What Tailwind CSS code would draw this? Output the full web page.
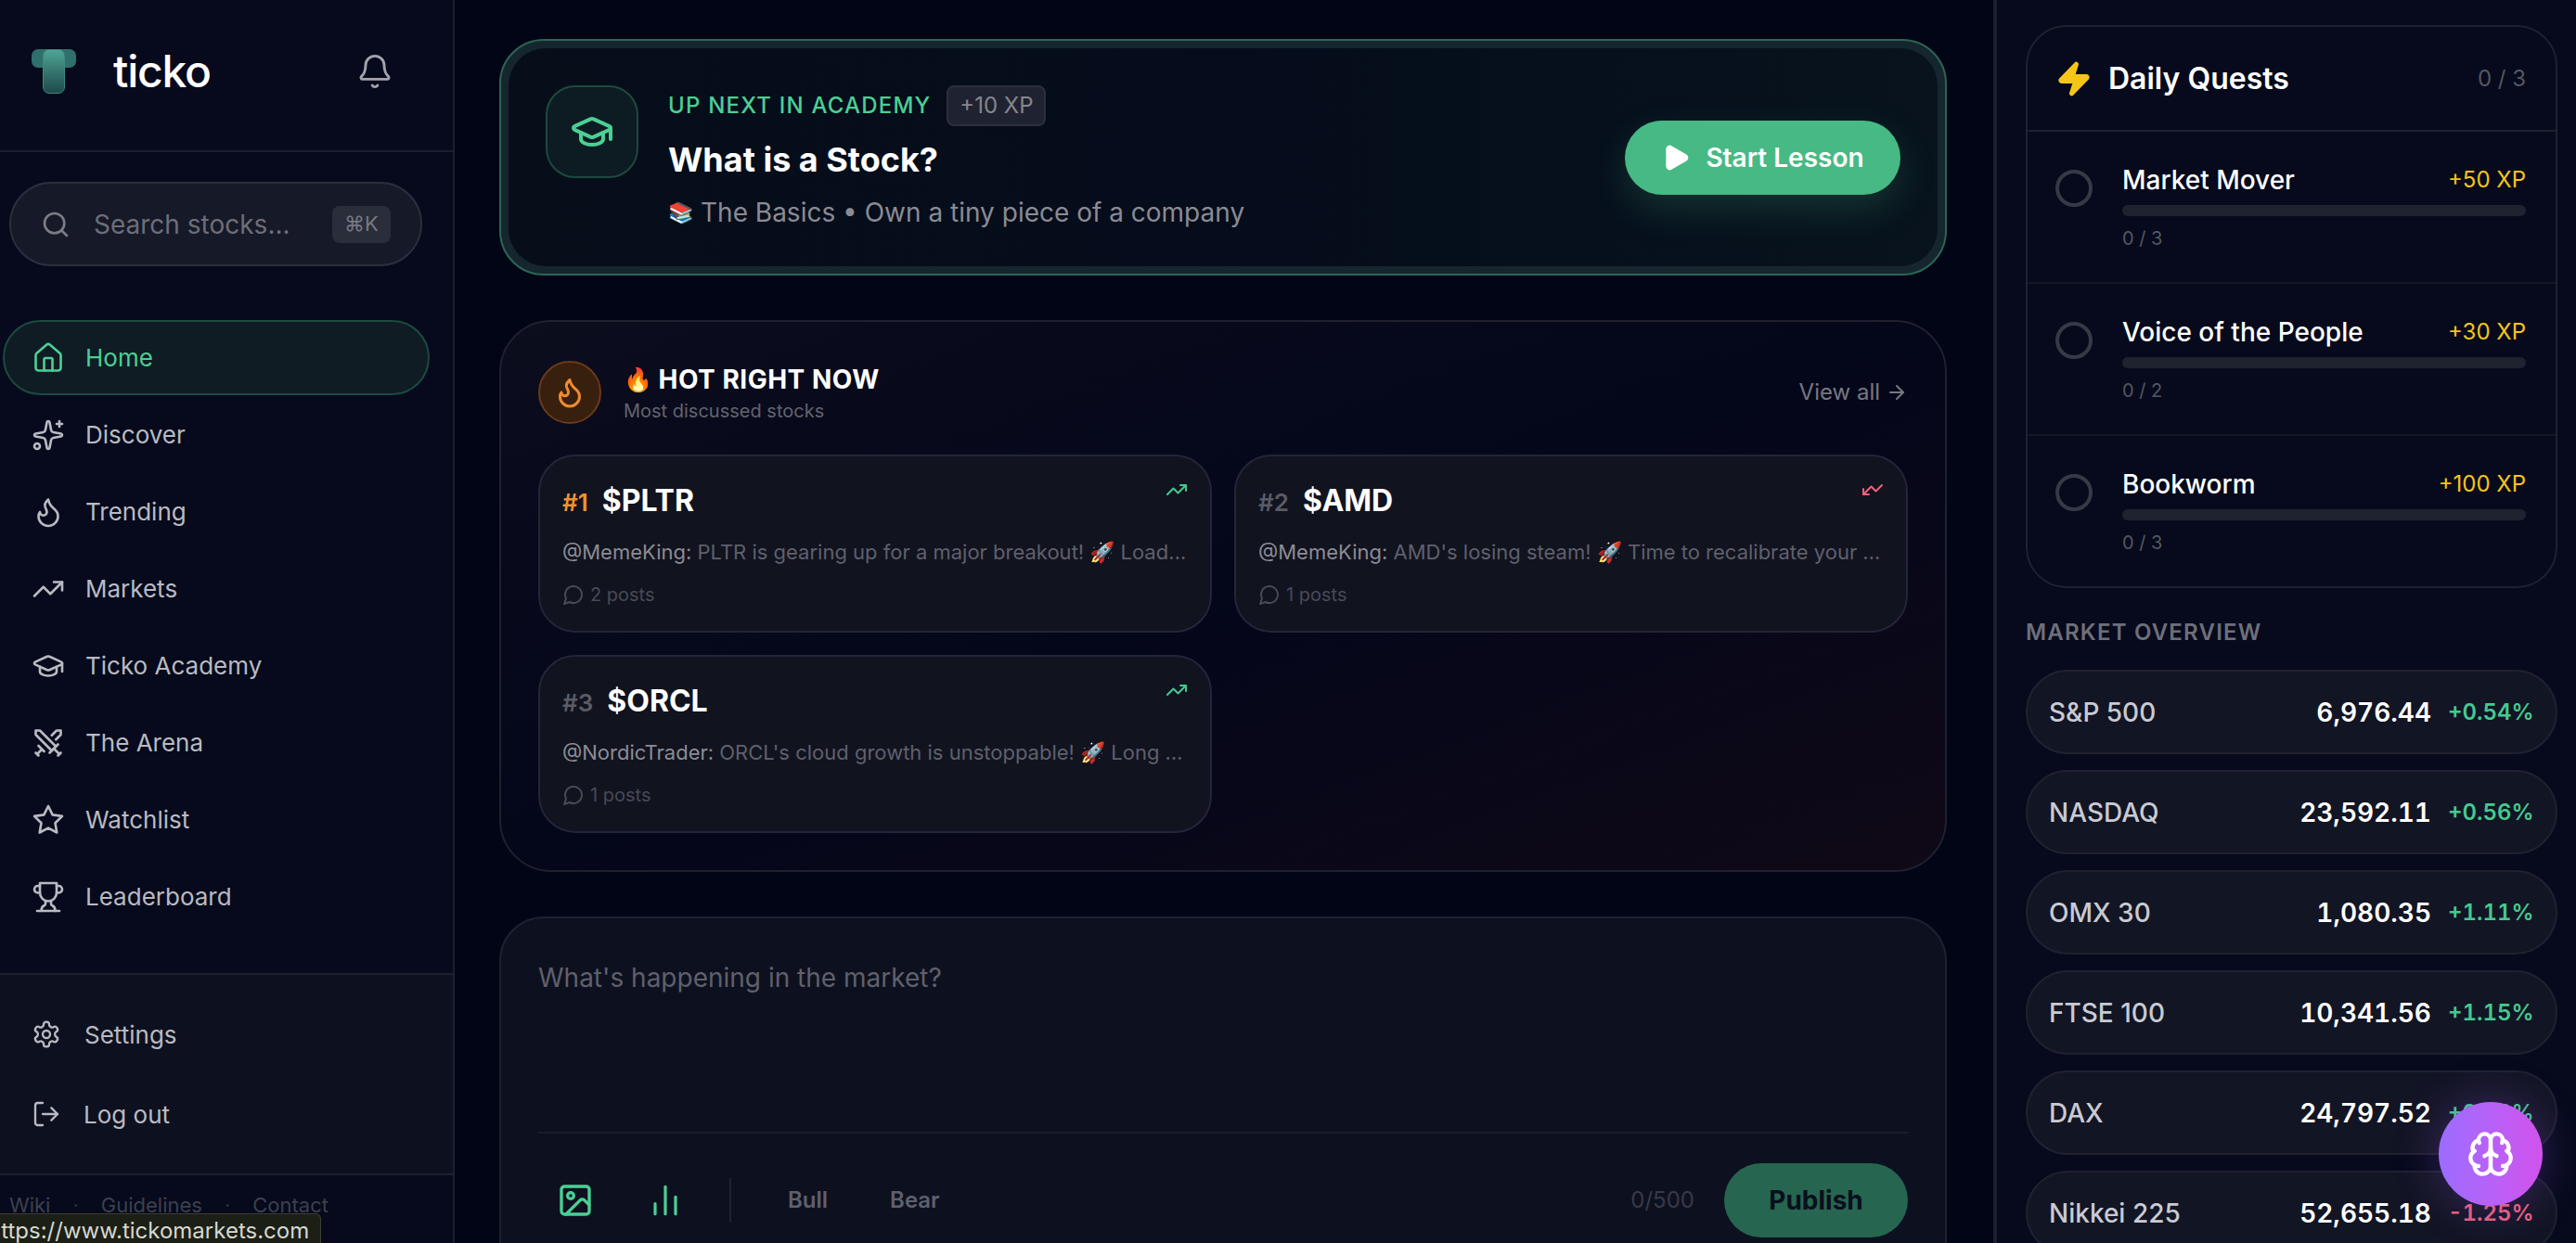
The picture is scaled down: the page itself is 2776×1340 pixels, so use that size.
<!DOCTYPE html>
<html lang="en">
<head>
    <meta charset="UTF-8">
    <meta name="viewport" content="width=device-width, initial-scale=1.0">
    <title>Ticko</title>
    <script src="https://cdn.jsdelivr.net/npm/@tailwindcss/browser@4"></script>
</head>
<body class="bg-[#020516] font-[Inter,sans-serif] text-white">
<div class="relative flex h-[1340px] w-[2776px] overflow-hidden">

    <!-- left sidebar -->
    <aside class="relative flex h-full w-[490px] shrink-0 flex-col border-r-2 border-[#1c1f2e] bg-[#060a1c]">
        <div class="flex h-[164px] shrink-0 items-center border-b-2 border-[#1c1f2e] pb-[8px] pl-[34px]">
            <div class="relative h-[48px] w-[48px]">
                <div class="absolute left-0 top-0 h-[20px] w-[48px] rounded-[7px] bg-[#2f6f6c]"></div>
                <div class="absolute left-[12px] top-0 h-[48px] w-[24px] rounded-[7px] border border-[#3d8a80] bg-gradient-to-b from-[#4fa595] to-[#1f4a4c]"></div>
            </div>
            <span class="ml-[40px] text-[48px] font-medium leading-none tracking-[-1.2px]">ticko</span>
            <svg class="ml-[157px] h-[40px] w-[40px] text-[#a3a3ab]" viewBox="0 0 24 24" fill="none" stroke="currentColor" stroke-width="1.75" stroke-linecap="round" stroke-linejoin="round"><path d="M10.268 21a2 2 0 0 0 3.464 0"/><path d="M3.262 15.326A1 1 0 0 0 4 17h16a1 1 0 0 0 .74-1.673C19.41 13.956 18 12.499 18 8A6 6 0 0 0 6 8c0 4.499-1.411 5.956-2.738 7.326"/></svg>
        </div>

        <div class="ml-[10px] mt-[32px] flex h-[91px] w-[445px] shrink-0 items-center rounded-full border-2 border-[#2b2e3c] bg-[#161927] pl-[32px] pr-[32px]">
            <svg class="h-[32px] w-[32px] text-[#7b7c86]" viewBox="0 0 24 24" fill="none" stroke="currentColor" stroke-width="2" stroke-linecap="round" stroke-linejoin="round"><path d="m21 21-4.34-4.34"/><circle cx="11" cy="11" r="8"/></svg>
            <span class="ml-[25px] text-[28px] text-[#6d6e79]">Search stocks...</span>
            <span class="ml-auto flex h-[40px] w-[63px] items-center justify-center rounded-[8px] bg-[#2a2d3a] text-[22px] text-[#777884]">⌘K</span>
        </div>

        <nav class="ml-[3px] mt-[58px] flex w-[460px] flex-col gap-[2px] text-[26px] text-[#b9bac2]">
            <a class="flex h-[81px] items-center gap-[22px] rounded-full border-2 border-[#1c4a3f] bg-[#0f1c24] pl-[29px] text-[#4ccf94]">
                <svg class="h-[36px] w-[36px]" viewBox="0 0 24 24" fill="none" stroke="currentColor" stroke-width="1.75" stroke-linecap="round" stroke-linejoin="round"><path d="M15 21v-8a1 1 0 0 0-1-1h-4a1 1 0 0 0-1 1v8"/><path d="M3 10a2 2 0 0 1 .709-1.528l7-5.999a2 2 0 0 1 2.582 0l7 5.999A2 2 0 0 1 21 10v9a2 2 0 0 1-2 2H5a2 2 0 0 1-2-2z"/></svg>
                Home
            </a>
            <a class="flex h-[81px] items-center gap-[22px] pl-[31px]">
                <svg class="h-[36px] w-[36px]" viewBox="0 0 24 24" fill="none" stroke="currentColor" stroke-width="1.75" stroke-linecap="round" stroke-linejoin="round"><path d="M11.017 2.814a1 1 0 0 1 1.966 0l1.051 5.558a2 2 0 0 0 1.594 1.594l5.558 1.051a1 1 0 0 1 0 1.966l-5.558 1.051a2 2 0 0 0-1.594 1.594l-1.051 5.558a1 1 0 0 1-1.966 0l-1.051-5.558a2 2 0 0 0-1.594-1.594l-5.558-1.051a1 1 0 0 1 0-1.966l5.558-1.051a2 2 0 0 0 1.594-1.594z"/><path d="M20 2v4"/><path d="M22 4h-4"/><circle cx="4" cy="20" r="2"/></svg>
                Discover
            </a>
            <a class="flex h-[81px] items-center gap-[22px] pl-[31px]">
                <svg class="h-[36px] w-[36px]" viewBox="0 0 24 24" fill="none" stroke="currentColor" stroke-width="1.75" stroke-linecap="round" stroke-linejoin="round"><path d="M8.5 14.5A2.5 2.5 0 0 0 11 12c0-1.38-.5-2-1-3-1.072-2.143-.224-4.054 2-6 .5 2.5 2 4.9 4 6.5 2 1.6 3 3.5 3 5.5a7 7 0 1 1-14 0c0-1.153.433-2.294 1-3a2.5 2.5 0 0 0 2.5 2.5z"/></svg>
                Trending
            </a>
            <a class="flex h-[81px] items-center gap-[22px] pl-[31px]">
                <svg class="h-[36px] w-[36px]" viewBox="0 0 24 24" fill="none" stroke="currentColor" stroke-width="1.75" stroke-linecap="round" stroke-linejoin="round"><polyline points="22 7 13.5 15.5 8.5 10.5 2 17"/><polyline points="16 7 22 7 22 13"/></svg>
                Markets
            </a>
            <a class="flex h-[81px] items-center gap-[22px] pl-[31px]">
                <svg class="h-[36px] w-[36px]" viewBox="0 0 24 24" fill="none" stroke="currentColor" stroke-width="1.75" stroke-linecap="round" stroke-linejoin="round"><path d="M21.42 10.922a1 1 0 0 0-.019-1.838L12.83 5.18a2 2 0 0 0-1.66 0L2.6 9.08a1 1 0 0 0 0 1.832l8.57 3.908a2 2 0 0 0 1.66 0z"/><path d="M22 10v6"/><path d="M6 12.5V16a6 3 0 0 0 12 0v-3.5"/></svg>
                Ticko Academy
            </a>
            <a class="flex h-[81px] items-center gap-[22px] pl-[31px]">
                <svg class="h-[36px] w-[36px]" viewBox="0 0 24 24" fill="none" stroke="currentColor" stroke-width="1.75" stroke-linecap="round" stroke-linejoin="round"><polyline points="14.5 17.5 3 6 3 3 6 3 17.5 14.5"/><line x1="13" x2="19" y1="19" y2="13"/><line x1="16" x2="20" y1="16" y2="20"/><line x1="19" x2="21" y1="21" y2="19"/><polyline points="14.5 6.5 18 3 21 3 21 6 17.5 9.5"/><line x1="5" x2="9" y1="14" y2="18"/><line x1="7" x2="4" y1="17" y2="20"/><line x1="3" x2="5" y1="19" y2="21"/></svg>
                The Arena
            </a>
            <a class="flex h-[81px] items-center gap-[22px] pl-[31px]">
                <svg class="h-[36px] w-[36px]" viewBox="0 0 24 24" fill="none" stroke="currentColor" stroke-width="1.75" stroke-linecap="round" stroke-linejoin="round"><polygon points="12 2 15.09 8.26 22 9.27 17 14.14 18.18 21.02 12 17.77 5.82 21.02 7 14.14 2 9.27 8.91 8.26 12 2"/></svg>
                Watchlist
            </a>
            <a class="flex h-[81px] items-center gap-[22px] pl-[31px]">
                <svg class="h-[36px] w-[36px]" viewBox="0 0 24 24" fill="none" stroke="currentColor" stroke-width="1.75" stroke-linecap="round" stroke-linejoin="round"><path d="M6 9H4.5a2.5 2.5 0 0 1 0-5H6"/><path d="M18 9h1.5a2.5 2.5 0 0 0 0-5H18"/><path d="M4 22h16"/><path d="M10 14.66V17c0 .55-.47.98-.97 1.21C7.85 18.75 7 20.24 7 22"/><path d="M14 14.66V17c0 .55.47.98.97 1.21C16.15 18.75 17 20.24 17 22"/><path d="M18 2H6v7a6 6 0 0 0 12 0V2Z"/></svg>
                Leaderboard
            </a>
        </nav>

        <div class="mt-[42px] flex h-[218px] shrink-0 flex-col border-y-2 border-[#1c1f2e] bg-[#0d111f] pt-[21px] text-[26px] text-[#b9bac2]">
            <a class="flex h-[86px] items-center gap-[25px] pl-[34px]">
                <svg class="h-[32px] w-[32px]" viewBox="0 0 24 24" fill="none" stroke="currentColor" stroke-width="1.75" stroke-linecap="round" stroke-linejoin="round"><path d="M12.22 2h-.44a2 2 0 0 0-2 2v.18a2 2 0 0 1-1 1.73l-.43.25a2 2 0 0 1-2 0l-.15-.08a2 2 0 0 0-2.73.73l-.22.38a2 2 0 0 0 .73 2.73l.15.1a2 2 0 0 1 1 1.72v.51a2 2 0 0 1-1 1.74l-.15.09a2 2 0 0 0-.73 2.73l.22.38a2 2 0 0 0 2.73.73l.15-.08a2 2 0 0 1 2 0l.43.25a2 2 0 0 1 1 1.73V20a2 2 0 0 0 2 2h.44a2 2 0 0 0 2-2v-.18a2 2 0 0 1 1-1.73l.43-.25a2 2 0 0 1 2 0l.15.08a2 2 0 0 0 2.73-.73l.22-.39a2 2 0 0 0-.73-2.73l-.15-.08a2 2 0 0 1-1-1.74v-.5a2 2 0 0 1 1-1.74l.15-.09a2 2 0 0 0 .73-2.73l-.22-.38a2 2 0 0 0-2.73-.73l-.15.08a2 2 0 0 1-2 0l-.43-.25a2 2 0 0 1-1-1.73V4a2 2 0 0 0-2-2z"/><circle cx="12" cy="12" r="3"/></svg>
                Settings
            </a>
            <a class="flex h-[86px] items-center gap-[24px] pl-[34px]">
                <svg class="h-[32px] w-[32px]" viewBox="0 0 24 24" fill="none" stroke="currentColor" stroke-width="1.75" stroke-linecap="round" stroke-linejoin="round"><path d="M9 21H5a2 2 0 0 1-2-2V5a2 2 0 0 1 2-2h4"/><polyline points="16 17 21 12 16 7"/><line x1="21" x2="9" y1="12" y2="12"/></svg>
                Log out
            </a>
        </div>

        <div class="mt-[18px] flex items-center pl-[10px] text-[22px] leading-[28px] text-[#3d404f]">
            <span>Wiki</span>
            <span class="ml-[24px] text-[#2c2f3c]">·</span>
            <span class="ml-[24px]">Guidelines</span>
            <span class="ml-[24px] text-[#2c2f3c]">·</span>
            <span class="ml-[24px]">Contact</span>
        </div>

        <!-- browser status bubble -->
        <div class="absolute bottom-0 left-0 flex h-[32px] w-[346px] items-center overflow-hidden rounded-tr-[6px] border-r border-t border-[#3c4030] bg-[#1b1f16] pt-[4px] text-[24px] text-[#d6d8d0]">
            <span class="ml-[-13px] whitespace-nowrap">https://www.tickomarkets.com</span>
        </div>
    </aside>

    <!-- feed -->
    <main class="flex h-full w-[1658px] shrink-0 flex-col overflow-hidden pl-[48px] pr-[50px] pt-[42px]">

        <section class="shrink-0 rounded-[48px] border-2 border-[#2a6654] bg-[#16262f] p-[8px]">
            <div class="flex h-[235px] items-start rounded-[40px] bg-gradient-to-r from-[#070e1a] via-[#050c1b] to-[#08131d] pl-[40px] pr-[40px] pt-[40px]">
                <div class="flex h-[100px] w-[100px] shrink-0 items-center justify-center rounded-[32px] border-2 border-[#1c4a3f] bg-[#0d1c22] text-[#4ccf94]">
                    <svg class="h-[48px] w-[48px]" viewBox="0 0 24 24" fill="none" stroke="currentColor" stroke-width="2" stroke-linecap="round" stroke-linejoin="round"><path d="M21.42 10.922a1 1 0 0 0-.019-1.838L12.83 5.18a2 2 0 0 0-1.66 0L2.6 9.08a1 1 0 0 0 0 1.832l8.57 3.908a2 2 0 0 0 1.66 0z"/><path d="M22 10v6"/><path d="M6 12.5V16a6 3 0 0 0 12 0v-3.5"/></svg>
                </div>
                <div class="ml-[32px] flex flex-col">
                    <div class="flex items-center gap-[17px]">
                        <span class="text-[24px] font-medium tracking-[1.2px] text-[#4ccf94]">UP NEXT IN ACADEMY</span>
                        <span class="flex h-[44px] w-[107px] items-center justify-center rounded-[8px] border-2 border-[#2c2f3c] bg-[#1f2230] text-[24px] text-[#85868f]">+10 XP</span>
                    </div>
                    <h2 class="mt-[10px] text-[36px] font-bold leading-[52px]">What is a Stock?</h2>
                    <p class="mt-[10px] flex items-center gap-[8px] text-[28px] leading-[42px] text-[#8a8b94]"><span class="text-[22px]">📚</span> The Basics • Own a tiny piece of a company</p>
                </div>
                <button class="ml-auto mt-[38px] flex h-[80px] w-[297px] shrink-0 items-center justify-center gap-[16px] rounded-full bg-[#47b984] text-[28px] font-semibold shadow-[0_16px_40px_rgba(71,185,132,0.2)]">
                    <svg class="h-[32px] w-[32px]" viewBox="0 0 24 24" fill="white" stroke="white" stroke-width="2" stroke-linecap="round" stroke-linejoin="round"><path d="M5 5a2 2 0 0 1 3.008-1.728l11.997 6.998a2 2 0 0 1 .003 3.458l-12 7A2 2 0 0 1 5 19z"/></svg>
                    Start Lesson
                </button>
            </div>
        </section>

        <section class="mt-[48px] shrink-0 rounded-[56px] border-2 border-[#1f2130] bg-gradient-to-br from-[#0c0d1d] via-[#04061a] to-[#100917] pb-[40px] pl-[40px] pr-[40px] pt-[41px]">
            <div class="flex items-center">
                <div class="flex h-[68px] w-[68px] items-center justify-center rounded-full border-2 border-[#6b3a18] bg-[#38200f] text-[#f08a2c]">
                    <svg class="h-[36px] w-[36px]" viewBox="0 0 24 24" fill="none" stroke="currentColor" stroke-width="2" stroke-linecap="round" stroke-linejoin="round"><path d="M8.5 14.5A2.5 2.5 0 0 0 11 12c0-1.38-.5-2-1-3-1.072-2.143-.224-4.054 2-6 .5 2.5 2 4.9 4 6.5 2 1.6 3 3.5 3 5.5a7 7 0 1 1-14 0c0-1.153.433-2.294 1-3a2.5 2.5 0 0 0 2.5 2.5z"/></svg>
                </div>
                <div class="ml-[24px] flex flex-col pt-[2px]">
                    <h3 class="flex items-center gap-[6px] text-[28px] font-bold leading-[38px] tracking-[0.5px]"><span class="text-[25px]">🔥</span> HOT RIGHT NOW</h3>
                    <p class="text-[20px] leading-[30px] text-[#63646f]">Most discussed stocks</p>
                </div>
                <a class="ml-auto flex items-center gap-[6px] text-[24px] text-[#777882]">View all
                    <svg class="h-[24px] w-[24px]" viewBox="0 0 24 24" fill="none" stroke="currentColor" stroke-width="2" stroke-linecap="round" stroke-linejoin="round"><path d="M5 12h14"/><path d="m12 5 7 7-7 7"/></svg>
                </a>
            </div>

            <div class="mt-[32px] grid grid-cols-2 gap-[24px]">
                <div class="relative h-[192px] rounded-[40px] border-2 border-[#23253a] bg-[#11131f] pl-[24px] pr-[24px] pt-[24px]">
                    <div class="flex items-baseline gap-[15px]">
                        <span class="text-[26px] font-semibold text-[#f0922e]">#1</span>
                        <span class="text-[32px] font-bold">$PLTR</span>
                    </div>
                    <p class="mt-[12px] truncate text-[22px] leading-[38px] text-[#5f606c]"><span class="text-[#8b8c95]">@MemeKing:</span> PLTR is gearing up for a major breakout! 🚀 Loading up on calls, this is the one</p>
                    <p class="mt-[12px] flex items-center gap-[6px] text-[20px] text-[#494a56]">
                        <svg class="h-[24px] w-[24px]" viewBox="0 0 24 24" fill="none" stroke="currentColor" stroke-width="2" stroke-linecap="round" stroke-linejoin="round"><path d="M7.9 20A9 9 0 1 0 4 16.1L2 22Z"/></svg>
                        2 posts
                    </p>
                    <svg class="absolute right-[24px] top-[24px] h-[24px] w-[24px] text-[#45c98f]" viewBox="0 0 24 24" fill="none" stroke="currentColor" stroke-width="2" stroke-linecap="round" stroke-linejoin="round"><polyline points="22 7 13.5 15.5 8.5 10.5 2 17"/><polyline points="16 7 22 7 22 13"/></svg>
                </div>
                <div class="relative h-[192px] rounded-[40px] border-2 border-[#23253a] bg-[#11131f] pl-[24px] pr-[24px] pt-[24px]">
                    <div class="flex items-baseline gap-[15px]">
                        <span class="text-[26px] font-semibold text-[#5a5b66]">#2</span>
                        <span class="text-[32px] font-bold">$AMD</span>
                    </div>
                    <p class="mt-[12px] truncate text-[22px] leading-[38px] text-[#5f606c]"><span class="text-[#8b8c95]">@MemeKing:</span> AMD's losing steam! 🚀 Time to recalibrate your portfolio before the drop</p>
                    <p class="mt-[12px] flex items-center gap-[6px] text-[20px] text-[#494a56]">
                        <svg class="h-[24px] w-[24px]" viewBox="0 0 24 24" fill="none" stroke="currentColor" stroke-width="2" stroke-linecap="round" stroke-linejoin="round"><path d="M7.9 20A9 9 0 1 0 4 16.1L2 22Z"/></svg>
                        1 posts
                    </p>
                    <svg class="absolute right-[24px] top-[24px] h-[24px] w-[24px] rotate-180 text-[#f0607a]" viewBox="0 0 24 24" fill="none" stroke="currentColor" stroke-width="2" stroke-linecap="round" stroke-linejoin="round"><polyline points="22 7 13.5 15.5 8.5 10.5 2 17"/><polyline points="16 7 22 7 22 13"/></svg>
                </div>
                <div class="relative h-[192px] rounded-[40px] border-2 border-[#23253a] bg-[#11131f] pl-[24px] pr-[24px] pt-[24px]">
                    <div class="flex items-baseline gap-[15px]">
                        <span class="text-[26px] font-semibold text-[#5a5b66]">#3</span>
                        <span class="text-[32px] font-bold">$ORCL</span>
                    </div>
                    <p class="mt-[12px] truncate text-[22px] leading-[38px] text-[#5f606c]"><span class="text-[#8b8c95]">@NordicTrader:</span> ORCL's cloud growth is unstoppable! 🚀 Long term hold for me, no question</p>
                    <p class="mt-[12px] flex items-center gap-[6px] text-[20px] text-[#494a56]">
                        <svg class="h-[24px] w-[24px]" viewBox="0 0 24 24" fill="none" stroke="currentColor" stroke-width="2" stroke-linecap="round" stroke-linejoin="round"><path d="M7.9 20A9 9 0 1 0 4 16.1L2 22Z"/></svg>
                        1 posts
                    </p>
                    <svg class="absolute right-[24px] top-[24px] h-[24px] w-[24px] text-[#45c98f]" viewBox="0 0 24 24" fill="none" stroke="currentColor" stroke-width="2" stroke-linecap="round" stroke-linejoin="round"><polyline points="22 7 13.5 15.5 8.5 10.5 2 17"/><polyline points="16 7 22 7 22 13"/></svg>
                </div>
            </div>
        </section>

        <section class="mt-[48px] h-[500px] shrink-0 rounded-[48px] border-2 border-[#1f2130] bg-[#0d111f] pl-[40px] pr-[40px] pt-[42px]">
            <p class="text-[28px] leading-[44px] text-[#5f606c]">What's happening in the market?</p>
            <div class="mt-[144px] flex h-[146px] items-center border-t-2 border-[#1b1e2b]">
                <svg class="ml-[20px] h-[40px] w-[40px] text-[#4ccf94]" viewBox="0 0 24 24" fill="none" stroke="currentColor" stroke-width="2" stroke-linecap="round" stroke-linejoin="round"><rect width="18" height="18" x="3" y="3" rx="2" ry="2"/><circle cx="9" cy="9" r="2"/><path d="m21 15-3.086-3.086a2 2 0 0 0-2.828 0L6 21"/></svg>
                <svg class="ml-[55px] h-[44px] w-[44px] text-[#4ccf94]" viewBox="0 0 24 24" fill="none" stroke="currentColor" stroke-width="1.75" stroke-linecap="round" stroke-linejoin="round"><line x1="18" x2="18" y1="20" y2="10"/><line x1="12" x2="12" y1="20" y2="4"/><line x1="6" x2="6" y1="20" y2="14"/></svg>
                <div class="ml-[47px] h-[48px] w-[2px] bg-[#1f2230]"></div>
                <span class="ml-[61px] text-[24px] font-semibold text-[#5f606c]">Bull</span>
                <span class="ml-[67px] text-[24px] font-semibold text-[#5f606c]">Bear</span>
                <span class="ml-auto text-[24px] text-[#383a47]">0/500</span>
                <button class="ml-[32px] flex h-[80px] w-[198px] items-center justify-center rounded-full bg-[#26654f] text-[28px] font-bold text-[#0a0f1c]">Publish</button>
            </div>
        </section>
    </main>

    <!-- right rail -->
    <aside class="flex h-full w-[628px] shrink-0 flex-col overflow-hidden border-l-4 border-[#1c1f2e] bg-[#060a1c] pl-[31px] pr-[20px] pt-[27px]">
        <div class="shrink-0 rounded-[44px] border-2 border-[#1e2130]">
            <div class="flex h-[113px] items-center border-b-2 border-[#1e2130] pl-[30px] pr-[32px]">
                <svg class="h-[40px] w-[40px] text-[#f5c518]" viewBox="0 0 24 24" fill="currentColor" stroke="currentColor" stroke-width="2" stroke-linecap="round" stroke-linejoin="round"><path d="M4 14a1 1 0 0 1-.78-1.63l9.9-10.2a.5.5 0 0 1 .86.46l-1.92 6.02A1 1 0 0 0 13 10h7a1 1 0 0 1 .78 1.63l-9.9 10.2a.5.5 0 0 1-.86-.46l1.92-6.02A1 1 0 0 0 11 14z"/></svg>
                <span class="ml-[17px] text-[32px] font-semibold">Daily Quests</span>
                <span class="ml-auto text-[24px] text-[#555663]">0 / 3</span>
            </div>
            <div class="flex h-[164px] border-b-2 border-[#141724] pl-[30px] pr-[32px] pt-[33px]">
                <div class="mt-[8px] h-[40px] w-[40px] shrink-0 rounded-full border-4 border-[#363946]"></div>
                <div class="ml-[32px] flex-1">
                    <div class="flex h-[38px] items-center justify-between">
                        <span class="text-[28px] font-medium leading-none">Market Mover</span>
                        <span class="text-[24px] leading-none text-[#f5c518]">+50 XP</span>
                    </div>
                    <div class="mt-[8px] h-[12px] rounded-full bg-[#1f2330]"></div>
                    <p class="mt-[10px] text-[20px] leading-[28px] text-[#555663]">0 / 3</p>
                </div>
            </div>
            <div class="flex h-[164px] border-b-2 border-[#141724] pl-[30px] pr-[32px] pt-[33px]">
                <div class="mt-[8px] h-[40px] w-[40px] shrink-0 rounded-full border-4 border-[#363946]"></div>
                <div class="ml-[32px] flex-1">
                    <div class="flex h-[38px] items-center justify-between">
                        <span class="text-[28px] font-medium leading-none">Voice of the People</span>
                        <span class="text-[24px] leading-none text-[#f5c518]">+30 XP</span>
                    </div>
                    <div class="mt-[8px] h-[12px] rounded-full bg-[#1f2330]"></div>
                    <p class="mt-[10px] text-[20px] leading-[28px] text-[#555663]">0 / 2</p>
                </div>
            </div>
            <div class="flex h-[162px] pl-[30px] pr-[32px] pt-[33px]">
                <div class="mt-[8px] h-[40px] w-[40px] shrink-0 rounded-full border-4 border-[#363946]"></div>
                <div class="ml-[32px] flex-1">
                    <div class="flex h-[38px] items-center justify-between">
                        <span class="text-[28px] font-medium leading-none">Bookworm</span>
                        <span class="text-[24px] leading-none text-[#f5c518]">+100 XP</span>
                    </div>
                    <div class="mt-[8px] h-[12px] rounded-full bg-[#1f2330]"></div>
                    <p class="mt-[10px] text-[20px] leading-[28px] text-[#555663]">0 / 3</p>
                </div>
            </div>
        </div>

        <h4 class="mt-[33px] text-[24px] font-semibold leading-[30px] tracking-[1.2px] text-[#6e6f7a]">MARKET OVERVIEW</h4>

        <div class="mt-[25px] flex flex-col gap-[17px]">
            <div class="flex h-[91px] shrink-0 items-center rounded-full border-2 border-[#1f2130] bg-[#121524] pl-[23px] pr-[26px]">
                <span class="text-[28px] font-medium text-[#c9cad2]">S&amp;P 500</span>
                <span class="ml-auto text-[28px] font-semibold tabular-nums">6,976.44</span>
                <span class="ml-[18px] w-[90px] text-right text-[24px] font-semibold tabular-nums text-[#45c98f]">+0.54%</span>
            </div>
            <div class="flex h-[91px] shrink-0 items-center rounded-full border-2 border-[#1f2130] bg-[#121524] pl-[23px] pr-[26px]">
                <span class="text-[28px] font-medium text-[#c9cad2]">NASDAQ</span>
                <span class="ml-auto text-[28px] font-semibold tabular-nums">23,592.11</span>
                <span class="ml-[18px] w-[90px] text-right text-[24px] font-semibold tabular-nums text-[#45c98f]">+0.56%</span>
            </div>
            <div class="flex h-[91px] shrink-0 items-center rounded-full border-2 border-[#1f2130] bg-[#121524] pl-[23px] pr-[26px]">
                <span class="text-[28px] font-medium text-[#c9cad2]">OMX 30</span>
                <span class="ml-auto text-[28px] font-semibold tabular-nums">1,080.35</span>
                <span class="ml-[18px] w-[90px] text-right text-[24px] font-semibold tabular-nums text-[#45c98f]">+1.11%</span>
            </div>
            <div class="flex h-[91px] shrink-0 items-center rounded-full border-2 border-[#1f2130] bg-[#121524] pl-[23px] pr-[26px]">
                <span class="text-[28px] font-medium text-[#c9cad2]">FTSE 100</span>
                <span class="ml-auto text-[28px] font-semibold tabular-nums">10,341.56</span>
                <span class="ml-[18px] w-[90px] text-right text-[24px] font-semibold tabular-nums text-[#45c98f]">+1.15%</span>
            </div>
            <div class="flex h-[91px] shrink-0 items-center rounded-full border-2 border-[#1f2130] bg-[#121524] pl-[23px] pr-[26px]">
                <span class="text-[28px] font-medium text-[#c9cad2]">DAX</span>
                <span class="ml-auto text-[28px] font-semibold tabular-nums">24,797.52</span>
                <span class="ml-[18px] w-[90px] text-right text-[24px] font-semibold tabular-nums text-[#45c98f]">+0.98%</span>
            </div>
            <div class="flex h-[91px] shrink-0 items-center rounded-full border-2 border-[#1f2130] bg-[#121524] pl-[23px] pr-[26px]">
                <span class="text-[28px] font-medium text-[#c9cad2]">Nikkei 225</span>
                <span class="ml-auto text-[28px] font-semibold tabular-nums">52,655.18</span>
                <span class="ml-[18px] w-[90px] text-right text-[24px] font-semibold tabular-nums text-[#e8607e]">-1.25%</span>
            </div>
        </div>
    </aside>

    <!-- floating assistant button -->
    <button class="absolute left-[2628px] top-[1188px] flex h-[112px] w-[112px] items-center justify-center rounded-full bg-gradient-to-r from-[#9b6cff] to-[#d152ee] text-white shadow-[0_0_50px_rgba(168,85,247,0.3)]">
        <svg class="h-[52px] w-[52px]" viewBox="0 0 24 24" fill="none" stroke="currentColor" stroke-width="2" stroke-linecap="round" stroke-linejoin="round"><path d="M12 5a3 3 0 1 0-5.997.125 4 4 0 0 0-2.526 5.77 4 4 0 0 0 .556 6.588A4 4 0 1 0 12 18Z"/><path d="M12 5a3 3 0 1 1 5.997.125 4 4 0 0 1 2.526 5.77 4 4 0 0 1-.556 6.588A4 4 0 1 1 12 18Z"/><path d="M15 13a4.5 4.5 0 0 1-3-4 4.5 4.5 0 0 1-3 4"/><path d="M17.599 6.5a3 3 0 0 0 .399-1.375"/><path d="M6.003 5.125A3 3 0 0 0 6.401 6.5"/><path d="M3.477 10.896a4 4 0 0 1 .585-.396"/><path d="M19.938 10.5a4 4 0 0 1 .585.396"/><path d="M6 18a4 4 0 0 1-1.967-.516"/><path d="M19.967 17.484A4 4 0 0 1 18 18"/></svg>
    </button>
</div>
</body>
</html>
